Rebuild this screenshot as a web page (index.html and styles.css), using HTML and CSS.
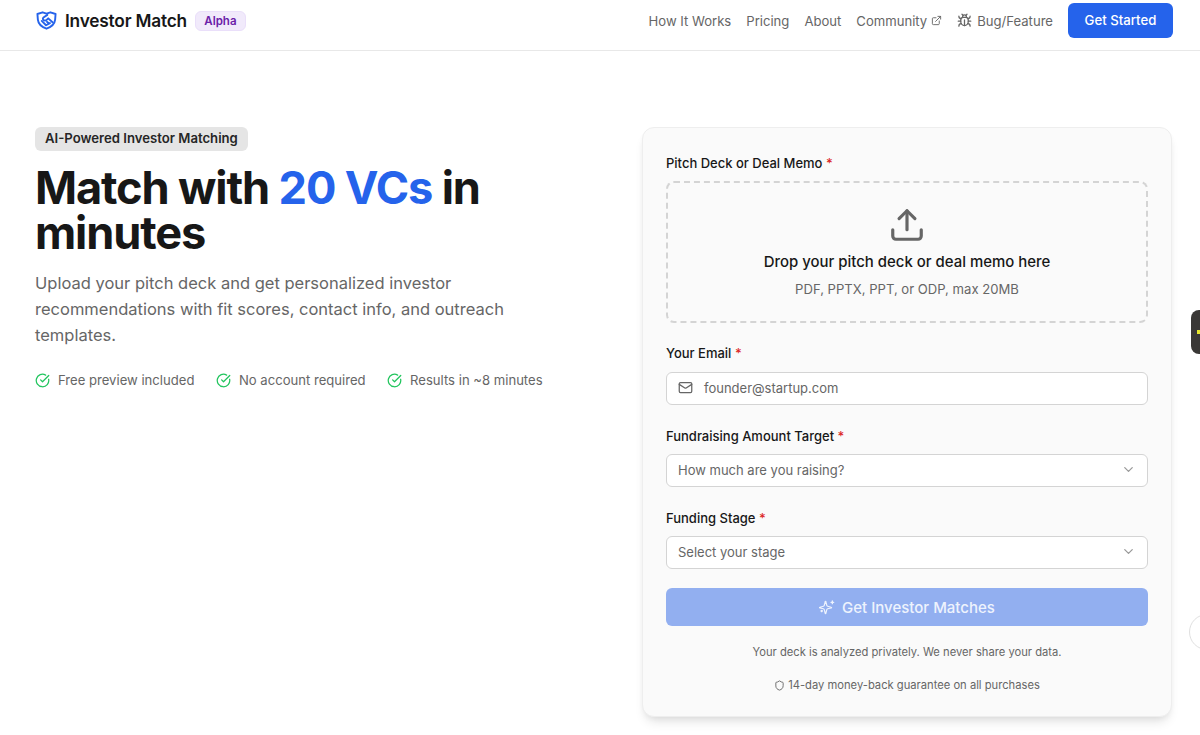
FILE: index.html
```html
<!DOCTYPE html>
<html lang="en">
<head>
<meta charset="utf-8">
<title>Investor Match</title>
<link rel="stylesheet" href="styles.css">
</head>
<body>
<header class="topbar">
  <div class="brand">
    <svg class="brand-icon" viewBox="0 0 24 22" fill="none" stroke="#2563eb" stroke-width="2.200" stroke-linecap="round" stroke-linejoin="round"><path d="M1.500 3.500 7.500 1.500 12 3l4.500-1.500 6 2-.5 6.500c-.5 5-4.500 8.500-10 10.500C6.500 18.500 2.500 15 2 10z"/><path d="M13 4.500 8.500 7.500a2 2 0 0 0 0 3c1.500 1 3 .5 4-.5l1.500-1.500 5 4.500"/><path d="m6.500 11.500 5 5 4.500-2.500m-3.500-1.500 2.500 2"/></svg>
    <span class="brand-name">Investor Match</span>
    <span class="alpha">Alpha</span>
  </div>
  <nav class="nav">
    <a class="nav-link low">How It Works</a>
    <a class="nav-link low">Pricing</a>
    <a class="nav-link low">About</a>
    <a class="nav-link">Community<svg class="ext" viewBox="0 0 24 24" fill="none" stroke="currentColor" stroke-width="2" stroke-linecap="round" stroke-linejoin="round"><path d="M18 13v6a2 2 0 0 1-2 2H5a2 2 0 0 1-2-2V8a2 2 0 0 1 2-2h6"/><path d="M15 3h6v6"/><path d="M10 14 21 3"/></svg></a>
    <a class="nav-link"><svg class="bug" viewBox="0 0 24 24" fill="none" stroke="currentColor" stroke-width="2" stroke-linecap="round" stroke-linejoin="round"><path d="m8 2 1.900 1.900"/><path d="M14.100 3.900 16 2"/><path d="M9 7.100v-1a3 3 0 1 1 6 0v1"/><path d="M12 20c-3.300 0-6-2.700-6-6v-3a4 4 0 0 1 4-4h4a4 4 0 0 1 4 4v3c0 3.300-2.700 6-6 6"/><path d="M12 20v-9"/><path d="M6.500 9C4.600 8.800 3 7.100 3 5"/><path d="M6 13H2"/><path d="M3 21c0-2.100 1.700-3.900 3.800-4"/><path d="M20.970 5c0 2.100-1.600 3.800-3.500 4"/><path d="M22 13h-4"/><path d="M17.200 17c2.100.1 3.800 1.900 3.800 4"/></svg>Bug/Feature</a>
    <a class="cta">Get Started</a>
  </nav>
</header>

<main class="hero">
  <section class="intro">
    <span class="pill">AI-Powered Investor Matching</span>
    <h1 class="headline">Match with <span class="accent">20 VCs</span> in<br>minutes</h1>
    <p class="lede">Upload your pitch deck and get personalized investor recommendations with fit scores, contact info, and outreach templates.</p>
    <ul class="perks">
      <li class="perk"><svg class="check" viewBox="0 0 24 24" fill="none" stroke="#22c55e" stroke-width="2" stroke-linecap="round" stroke-linejoin="round"><path d="M21.800 10A10 10 0 1 1 17 3.340"/><path d="m9 11 3 3L22 4"/></svg>Free preview included</li>
      <li class="perk"><svg class="check" viewBox="0 0 24 24" fill="none" stroke="#22c55e" stroke-width="2" stroke-linecap="round" stroke-linejoin="round"><path d="M21.800 10A10 10 0 1 1 17 3.340"/><path d="m9 11 3 3L22 4"/></svg>No account required</li>
      <li class="perk"><svg class="check" viewBox="0 0 24 24" fill="none" stroke="#22c55e" stroke-width="2" stroke-linecap="round" stroke-linejoin="round"><path d="M21.800 10A10 10 0 1 1 17 3.340"/><path d="m9 11 3 3L22 4"/></svg>Results in ~8 minutes</li>
    </ul>
  </section>

  <form class="card">
    <div class="field">
      <label class="label">Pitch Deck or Deal Memo <span class="req">*</span></label>
      <div class="drop">
        <svg class="upload" viewBox="0 0 24 24" fill="none" stroke="#666" stroke-width="2" stroke-linecap="round" stroke-linejoin="round"><path d="M21 15v4a2 2 0 0 1-2 2H5a2 2 0 0 1-2-2v-4"/><path d="m17 8-5-5-5 5"/><path d="M12 3v12"/></svg>
        <div class="drop-title">Drop your pitch deck or deal memo here</div>
        <div class="drop-sub">PDF, PPTX, PPT, or ODP, max 20MB</div>
      </div>
    </div>
    <div class="field field-email">
      <label class="label">Your Email <span class="req">*</span></label>
      <div class="control">
        <svg class="mail" viewBox="0 0 24 24" fill="none" stroke="#666" stroke-width="2" stroke-linecap="round" stroke-linejoin="round"><rect x="2" y="4" width="20" height="16" rx="2"/><path d="m22 7-8.970 5.700a1.940 1.940 0 0 1-2.060 0L2 7"/></svg>
        <span class="placeholder">founder@startup.com</span>
      </div>
    </div>
    <div class="field">
      <label class="label">Fundraising Amount Target <span class="req">*</span></label>
      <div class="control select">
        <span class="placeholder">How much are you raising?</span>
        <svg class="chev" viewBox="0 0 24 24" fill="none" stroke="#999" stroke-width="2" stroke-linecap="round" stroke-linejoin="round"><path d="m6 9 6 6 6-6"/></svg>
      </div>
    </div>
    <div class="field">
      <label class="label">Funding Stage <span class="req">*</span></label>
      <div class="control select">
        <span class="placeholder">Select your stage</span>
        <svg class="chev" viewBox="0 0 24 24" fill="none" stroke="#999" stroke-width="2" stroke-linecap="round" stroke-linejoin="round"><path d="m6 9 6 6 6-6"/></svg>
      </div>
    </div>
    <div class="submit">
      <svg class="spark" viewBox="0 0 24 24" fill="none" stroke="currentColor" stroke-width="2" stroke-linecap="round" stroke-linejoin="round"><path d="M9.900 15.500A2 2 0 0 0 8.500 14.100l-6.100-1.600a.5.5 0 0 1 0-1l6.100-1.600a2 2 0 0 0 1.400-1.400l1.600-6.100a.5.5 0 0 1 1 0l1.600 6.100a2 2 0 0 0 1.400 1.400l6.100 1.600a.5.5 0 0 1 0 1l-6.100 1.600a2 2 0 0 0-1.400 1.400l-1.600 6.100a.5.5 0 0 1-1 0z" transform="translate(-1 2) scale(.9)"/><path d="M20 3v4"/><path d="M22 5h-4"/><path d="M4 17v2"/><path d="M5 18H3"/></svg>
      Get Investor Matches
    </div>
    <p class="note">Your deck is analyzed privately. We never share your data.</p>
    <p class="note guarantee"><svg class="shield" viewBox="0 0 24 24" fill="none" stroke="#666" stroke-width="2" stroke-linecap="round" stroke-linejoin="round"><path d="M20 13c0 5-3.500 7.500-7.660 8.950a1 1 0 0 1-.67-.010C7.500 20.500 4 18 4 13V6a1 1 0 0 1 1-1c2 0 4.500-1.200 6.240-2.720a1.170 1.170 0 0 1 1.520 0C14.510 3.810 17 5 19 5a1 1 0 0 1 1 1z"/></svg>14-day money-back guarantee on all purchases</p>
  </form>
</main>

<div class="side-widget"><span class="side-dot"></span></div>
<div class="side-circle"></div>
</body>
</html>
```
FILE: styles.css
```css
* { box-sizing: border-box; }
html, body { height: 100%; }
body {
  margin: 0;
  overflow: hidden;
  background: #fff;
  color: #171717;
  font-family: Inter, "Liberation Sans", sans-serif;
  position: relative;
}
.topbar {
  height: 51px;
  padding: 0 27px 9px 36px;
  display: flex;
  align-items: center;
  justify-content: space-between;
  border-bottom: 1px solid #e8e8e8;
}
.brand { display: flex; align-items: center; }
.brand-icon { width: 21px; height: 19px; margin-right: 8px; }
.brand-name { font-size: 17.300px; font-weight: 600; letter-spacing: -.2px; }
.alpha {
  margin-left: 8px;
  width: 51px;
  height: 20px;
  border-radius: 6px;
  border: 1px solid #eadffa;
  background: #f1eafb;
  color: #6b21a8;
  font-size: 11.500px;
  font-weight: 600;
  display: flex;
  align-items: center;
  justify-content: center;
}
.nav { display: flex; align-items: center; }
.nav-link {
  font-size: 13.100px;
  color: #666;
  margin-right: 15px;
  display: flex;
  align-items: center;
}
.nav-link.low { padding-top: 1px; }
.ext { width: 11px; height: 11px; margin-left: 4px; }
.bug { width: 15px; height: 15px; margin-right: 5px; }
.cta {
  width: 105px;
  height: 35px;
  padding-bottom: 1px;
  border-radius: 6px;
  background: #2563eb;
  color: #fff;
  font-size: 13.200px;
  font-weight: 500;
  display: flex;
  align-items: center;
  justify-content: center;
}
.hero {
  display: flex;
  justify-content: space-between;
  align-items: flex-start;
  padding: 76px 28px 0 35px;
}
.intro { width: 512px; }
.pill {
  display: inline-block;
  height: 24px;
  line-height: 23px;
  padding: 0 10px;
  border-radius: 6px;
  background: #e5e5e5;
  font-size: 13.150px;
  font-weight: 600;
  color: #262626;
}
.headline {
  margin: 14px 0 0;
  font-size: 45.200px;
  line-height: 45px;
  font-weight: 700;
  letter-spacing: -1.130px;
}
.accent { color: #2563eb; }
.lede {
  margin: 15px 0 0;
  font-size: 16.500px;
  line-height: 26px;
  color: #666;
}
.perks {
  list-style: none;
  margin: 24px 0 0;
  padding: 0;
  display: flex;
  gap: 21.500px;
}
.perk {
  display: flex;
  align-items: center;
  font-size: 13.100px;
  color: #666;
}
.check { width: 15px; height: 15px; margin-right: 8px; }
.card {
  width: 530px;
  height: 590px;
  padding: 26px 23px 0;
  background: #fafafa;
  border: 1px solid #eeeeee;
  border-radius: 12px;
  box-shadow: 0 8px 12px -4px rgba(0,0,0,.12), 0 3px 6px -2px rgba(0,0,0,.06);
}
.field { margin-bottom: 22px; }
.label {
  display: block;
  font-size: 13px;
  line-height: 18px;
  font-weight: 500;
  color: #171717;
  margin-bottom: 9px;
}
.field-email { margin-top: -1px; }
.field-email .label { margin-bottom: 10px; }
.req { color: #dc2626; }
.drop {
  height: 142px;
  border: 2px dashed #d4d4d4;
  border-radius: 8px;
  display: flex;
  flex-direction: column;
  align-items: center;
  padding-top: 23px;
}
.upload { width: 38px; height: 38px; }
.drop-title { margin-top: 7px; font-size: 14.950px; line-height: 22px; font-weight: 500; }
.drop-sub { margin-top: 6px; font-size: 13.100px; line-height: 20px; color: #666; }
.control {
  height: 33px;
  background: #fff;
  border: 1px solid #d4d4d4;
  border-radius: 6px;
  padding: 0 11px 2px;
  display: flex;
  align-items: center;
  font-size: 13px;
  color: #666;
}
.select { justify-content: space-between; }
.mail { width: 15px; height: 15px; margin-right: 11px; }
.chev { width: 15px; height: 15px; }
.submit {
  height: 38px;
  margin-top: -3px;
  border-radius: 6px;
  background: #92aff0;
  color: #eef3fd;
  font-size: 15px;
  font-weight: 500;
  display: flex;
  align-items: center;
  justify-content: center;
}
.spark { width: 16px; height: 16px; margin-right: 7px; }
.note {
  margin: 18px 0 0;
  text-align: center;
  font-size: 11.200px;
  line-height: 16px;
  color: #666;
}
.guarantee {
  margin-top: 17px;
  display: flex;
  align-items: center;
  justify-content: center;
}
.shield { width: 11px; height: 11px; margin-right: 3px; }
.side-widget {
  position: absolute;
  left: 1191px;
  top: 310px;
  width: 30px;
  height: 44px;
  border-radius: 8px;
  background: #3a3836;
}
.side-dot {
  position: absolute;
  left: 6px;
  top: 20px;
  width: 4px;
  height: 4px;
  background: #e6e62e;
}
.side-circle {
  position: absolute;
  left: 1189px;
  top: 614px;
  width: 36px;
  height: 36px;
  border-radius: 50%;
  background: #fff;
  border: 1px solid #e0e0e0;
}
```
